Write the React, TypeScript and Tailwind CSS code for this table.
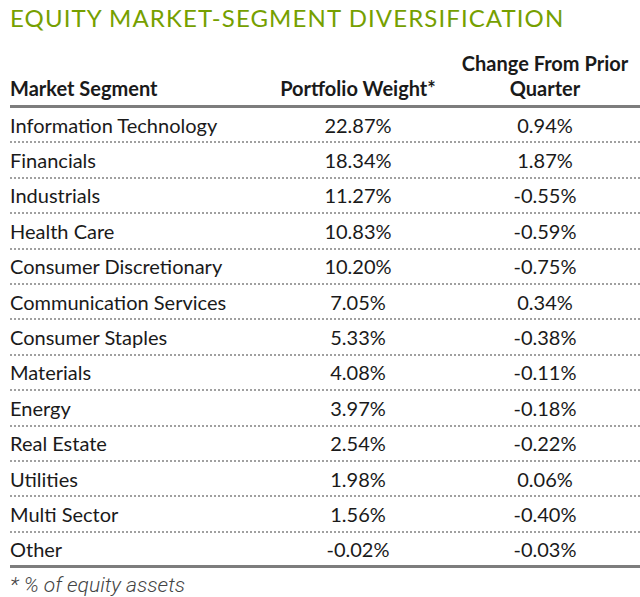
import React from "react";

const rows: [string, string, string][] = [
  ["Information Technology", "22.87%", "0.94%"],
  ["Financials", "18.34%", "1.87%"],
  ["Industrials", "11.27%", "-0.55%"],
  ["Health Care", "10.83%", "-0.59%"],
  ["Consumer Discretionary", "10.20%", "-0.75%"],
  ["Communication Services", "7.05%", "0.34%"],
  ["Consumer Staples", "5.33%", "-0.38%"],
  ["Materials", "4.08%", "-0.11%"],
  ["Energy", "3.97%", "-0.18%"],
  ["Real Estate", "2.54%", "-0.22%"],
  ["Utilities", "1.98%", "0.06%"],
  ["Multi Sector", "1.56%", "-0.40%"],
  ["Other", "-0.02%", "-0.03%"],
];

export default function App() {
  return (
    <div className="w-[640px] h-[597px] bg-white overflow-hidden pl-[10px] text-[#1a1a1a]" style={{ fontFamily: "Lato, 'Open Sans', sans-serif" }}>
      <h1 className="pt-[3px] text-[24px] leading-[30px] font-normal tracking-[1.1px] text-[#76a000] whitespace-nowrap">
        EQUITY MARKET-SEGMENT DIVERSIFICATION
      </h1>
      <div className="mt-[20px] flex items-end h-[55px] pb-[4px] border-b-[3px] border-[#7d7d7d] font-bold text-[20px] leading-[25px]">
        <div className="flex-1">Market Segment</div>
        <div className="w-[180px] text-center pr-[4px]">Portfolio Weight*</div>
        <div className="w-[190px] text-center">Change From Prior<br />Quarter</div>
      </div>
      {rows.map(([a, b, c], i) => (
        <div
          key={a}
          className={`flex items-center text-[20px] h-[35.4px] ${i < rows.length - 1 ? "border-b-2 border-dotted border-[#a0a0a0]" : "border-b-[3px] border-[#7d7d7d]"}`}
        >
          <div className="flex-1">{a}</div>
          <div className="w-[180px] text-center pr-[4px]">{b}</div>
          <div className="w-[190px] text-center">{c}</div>
        </div>
      ))}
      <div className="pt-[2px] text-[21px] italic text-[#444]" style={{ fontFamily: "Roboto, sans-serif", fontWeight: 300 }}>
        * % of equity assets
      </div>
    </div>
  );
}
